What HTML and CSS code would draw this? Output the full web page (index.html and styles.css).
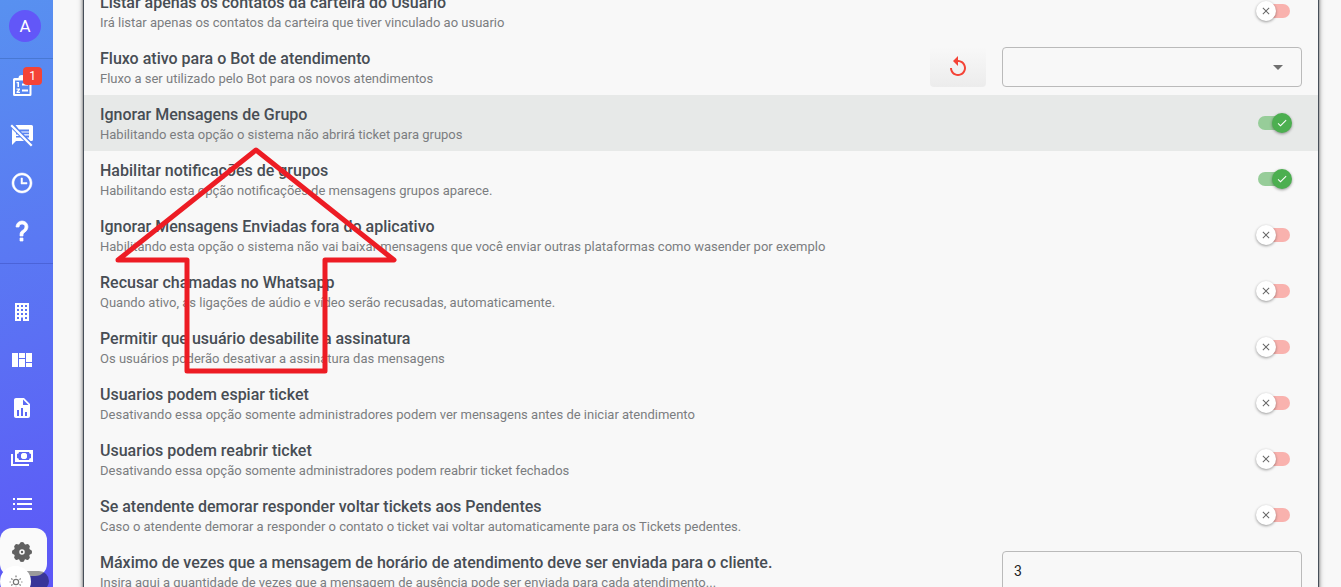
FILE: index.html
```html
<!DOCTYPE html>
<html lang="pt-BR">
<head>
<meta charset="utf-8">
<title>Configurações</title>
<link rel="stylesheet" href="styles.css">
</head>
<body>
<svg class="sprite" aria-hidden="true">
  <symbol id="check" viewBox="0 0 24 24"><path d="M9 16.2L4.8 12l-1.4 1.4L9 19 21 7l-1.4-1.4z"/></symbol>
  <symbol id="close" viewBox="0 0 24 24"><path d="M19 6.4L17.6 5 12 10.6 6.4 5 5 6.4l5.6 5.6L5 17.6 6.4 19l5.600-5.600 5.600 5.600 1.400-1.400-5.600-5.600z"/></symbol>
</svg>
<div class="app">
  <nav class="sidebar" aria-label="Menu">
    <div class="profile"><span class="avatar">A</span></div>
    <div class="group">
      <a class="nav-item" href="#" aria-label="Atendimentos">
        <svg viewBox="0 0 24 24"><path fill-rule="evenodd" d="M4.500 3H8.500a3.500 3 0 0 1 7 0H20a1.500 1.500 0 0 1 1.500 1.500V19.500A1.500 1.500 0 0 1 20 21H4.500A1.500 1.500 0 0 1 3 19.500V4.500A1.500 1.500 0 0 1 4.500 3zM5 5.500V19h14.500V5.500z"/><path d="M6.500 7H9V12H7.500V8.300H6.500zM6.500 13.500h3.500v1.200L8.300 16.700H10V18H6.500v-1.200L8.200 14.800H6.500zM12 8.500H18v2h-6zM12 14.500H18v2h-6z"/></svg>
        <span class="badge">1</span>
      </a>
      <a class="nav-item" href="#" aria-label="Chat interno">
        <svg viewBox="0 0 24 24"><path fill-rule="evenodd" d="M5.500 2H21.500A1.500 1.500 0 0 1 23 3.500V16.500A1.500 1.500 0 0 1 21.500 18H20.500L17 14.500H19V12.500H15L13.800 11.300H19V9.500H12L11 8.500H19V6.500H9zM2 6L6 10V11.500H7.500L9 13H6V14.500H10.500L14 18H6L2 22z"/><path fill="none" stroke="currentColor" stroke-width="2.200" d="M1.200 2.200L21.700 22.700"/></svg>
      </a>
      <a class="nav-item" href="#" aria-label="Agendamentos">
        <svg viewBox="0 0 24 24"><path stroke="currentColor" stroke-width=".5" d="M12 20C16.400 20 20 16.400 20 12S16.400 4 12 4 4 7.600 4 12 7.600 20 12 20M12 2C17.500 2 22 6.500 22 12S17.500 22 12 22C6.500 22 2 17.500 2 12C2 6.500 6.500 2 12 2M17 11.500V13H11V7H12.500V11.500H17Z"/></svg>
      </a>
      <a class="nav-item" href="#" aria-label="Ajuda">
        <svg viewBox="0 0 24 24"><path stroke="currentColor" stroke-width=".7" d="M10,19H13V22H10V19M12,2C17.350,2.220 19.680,7.620 16.500,11.670C15.670,12.670 14.330,13.330 13.670,14.170C13,15 13,16 13,17H10C10,15.330 10,13.920 10.670,12.920C11.330,11.920 12.670,11.330 13.500,10.670C15.920,8.430 15.320,5.260 12,5A3,3 0 0,0 9,8H6A6,6 0 0,1 12,2Z"/></svg>
      </a>
    </div>
    <div class="group admin">
      <a class="nav-item" href="#" aria-label="Empresas">
        <svg viewBox="0 0 24 24"><path fill-rule="evenodd" d="M5 3V21H11V17.500H13V21H19V3H5M7 5H9V7H7V5M11 5H13V7H11V5M15 5H17V7H15V5M7 9H9V11H7V9M11 9H13V11H11V9M15 9H17V11H15V9M7 13H9V15H7V13M11 13H13V15H11V13M15 13H17V15H15V13M7 17H9V19H7V17M15 17H17V19H15V17Z"/></svg>
      </a>
      <a class="nav-item" href="#" aria-label="Painel">
        <svg viewBox="0 0 24 24"><path d="M2,5V19H8V5H2M9,5V10H15V5H9M16,5V14H22V5H16M9,11V19H15V11H9M16,15V19H22V15H16Z"/></svg>
      </a>
      <a class="nav-item" href="#" aria-label="Relatórios">
        <svg viewBox="0 0 24 24"><path fill-rule="evenodd" d="M13,9H18.500L13,3.500V9M6,2H14L20,8V20A2,2 0 0,1 18,22H6C4.890,22 4,21.100 4,20V4C4,2.890 4.890,2 6,2M7,20H9V14H7V20M11,20H13V12H11V20M15,20H17V16H15V20Z"/></svg>
      </a>
      <a class="nav-item" href="#" aria-label="Financeiro">
        <svg viewBox="0 0 24 24"><path fill-rule="evenodd" d="M5,6H23V18H5V6M14,9A3,3 0 0,1 17,12A3,3 0 0,1 14,15A3,3 0 0,1 11,12A3,3 0 0,1 14,9M9,8A2,2 0 0,1 7,10V14A2,2 0 0,1 9,16H19A2,2 0 0,1 21,14V10A2,2 0 0,1 19,8H9M1,10H3V20H19V22H1V10Z"/><circle cx="14" cy="12" r="3"/></svg>
      </a>
      <a class="nav-item" href="#" aria-label="Filas">
        <svg viewBox="0 0 24 24"><path d="M3 6h2v2H3zM7 6h15v2H7zM3 11h2v2H3zM7 11h15v2H7zM3 16h2v2H3zM7 16h15v2H7z"/></svg>
      </a>
      <a class="nav-item active" href="#" aria-label="Configurações" aria-current="page">
        <svg viewBox="0 0 24 24"><g fill="none" stroke="currentColor"><circle cx="12" cy="12" r="5.500" stroke-width="5.500"/><path stroke-width="5" stroke-linecap="round" d="M12 4.500v1M12 18.500v1M4.500 12h1M18.500 12h1M6.700 6.700l.7.7M16.600 16.600l.7.7M17.300 6.700l-.7.7M7.400 16.600l-.7.7"/></g><circle cx="12" cy="12" r="1.200"/></svg>
      </a>
    </div>
    <label class="theme">
      <input type="checkbox" aria-label="Modo escuro">
      <span class="theme-thumb"><svg viewBox="0 0 24 24" fill="none" stroke="currentColor" stroke-width="2"><circle cx="12" cy="12" r="4.500"/><path d="M12 1v3M12 20v3M4 6l2 2M20 6l-2 2M4 18l2-2M20 18l-2-2M1 12h2M21 12h2"/></svg></span>
    </label>
  </nav>

  <main class="content">
    <section class="panel">
      <div class="row">
        <div class="text"><h2 id="t1">Listar apenas os contatos da carteira do Usuario</h2><p>Irá listar apenas os contatos da carteira que tiver vinculado ao usuario</p></div>
        <label class="toggle"><input type="checkbox" aria-labelledby="t1"><span class="thumb"><svg><use href="#close"/></svg></span></label>
      </div>
      <div class="row">
        <div class="text"><h2 id="t2">Fluxo ativo para o Bot de atendimento</h2><p>Fluxo a ser utilizado pelo Bot para os novos atendimentos</p></div>
        <button class="reset" type="button" aria-label="Restaurar"><svg viewBox="0 0 24 24"><path d="M12 5V1L7 6l5 5V7c3.310 0 6 2.690 6 6s-2.690 6-6 6-6-2.690-6-6H4c0 4.420 3.580 8 8 8s8-3.580 8-8-3.580-8-8-8z"/></svg></button>
        <div class="select"><select class="field" aria-labelledby="t2"><option></option></select><svg viewBox="0 0 24 24"><path d="M7 10l5 5 5-5z"/></svg></div>
      </div>
      <div class="row highlighted">
        <div class="text"><h2 id="t3">Ignorar Mensagens de Grupo</h2><p>Habilitando esta opção o sistema não abrirá ticket para grupos</p></div>
        <label class="toggle"><input type="checkbox" aria-labelledby="t3" checked><span class="thumb"><svg><use href="#check"/></svg></span></label>
      </div>
      <div class="row">
        <div class="text"><h2 id="t4">Habilitar notificações de grupos</h2><p>Habilitando esta opção notificações de mensagens grupos aparece.</p></div>
        <label class="toggle"><input type="checkbox" aria-labelledby="t4" checked><span class="thumb"><svg><use href="#check"/></svg></span></label>
      </div>
      <div class="row">
        <div class="text"><h2 id="t5">Ignorar Mensagens Enviadas fora do aplicativo</h2><p>Habilitando esta opção o sistema não vai baixar mensagens que você enviar outras plataformas como wasender por exemplo</p></div>
        <label class="toggle"><input type="checkbox" aria-labelledby="t5"><span class="thumb"><svg><use href="#close"/></svg></span></label>
      </div>
      <div class="row">
        <div class="text"><h2 id="t6">Recusar chamadas no Whatsapp</h2><p>Quando ativo, as ligações de aúdio e vídeo serão recusadas, automaticamente.</p></div>
        <label class="toggle"><input type="checkbox" aria-labelledby="t6"><span class="thumb"><svg><use href="#close"/></svg></span></label>
      </div>
      <div class="row">
        <div class="text"><h2 id="t7">Permitir que usuário desabilite a assinatura</h2><p>Os usuários poderão desativar a assinatura das mensagens</p></div>
        <label class="toggle"><input type="checkbox" aria-labelledby="t7"><span class="thumb"><svg><use href="#close"/></svg></span></label>
      </div>
      <div class="row">
        <div class="text"><h2 id="t8">Usuarios podem espiar ticket</h2><p>Desativando essa opção somente administradores podem ver mensagens antes de iniciar atendimento</p></div>
        <label class="toggle"><input type="checkbox" aria-labelledby="t8"><span class="thumb"><svg><use href="#close"/></svg></span></label>
      </div>
      <div class="row">
        <div class="text"><h2 id="t9">Usuarios podem reabrir ticket</h2><p>Desativando essa opção somente administradores podem reabrir ticket fechados</p></div>
        <label class="toggle"><input type="checkbox" aria-labelledby="t9"><span class="thumb"><svg><use href="#close"/></svg></span></label>
      </div>
      <div class="row">
        <div class="text"><h2 id="t10">Se atendente demorar responder voltar tickets aos Pendentes</h2><p>Caso o atendente demorar a responder o contato o ticket vai voltar automaticamente para os Tickets pedentes.</p></div>
        <label class="toggle"><input type="checkbox" aria-labelledby="t10"><span class="thumb"><svg><use href="#close"/></svg></span></label>
      </div>
      <div class="row">
        <div class="text"><h2 id="t11">Máximo de vezes que a mensagem de horário de atendimento deve ser enviada para o cliente.</h2><p>Insira aqui a quantidade de vezes que a mensagem de ausência pode ser enviada para cada atendimento...</p></div>
        <input class="field" type="text" value="3" aria-labelledby="t11">
      </div>
    </section>
  </main>
  <svg class="arrow" viewBox="0 0 284 230" aria-hidden="true"><path d="M142 4L280 114H211V225H73V114H4Z"/></svg>
</div>
</body>
</html>
```
FILE: styles.css
```css
* { box-sizing: border-box; }

body {
  margin: 0;
  background: #f8f8f8;
  color: #474d54;
  font-family: Roboto, "Liberation Sans", sans-serif;
  overflow: hidden;
}

h2, p { margin: 0; }
svg { display: block; fill: currentColor; }
.sprite { display: none; }

.app {
  position: relative;
  display: flex;
  height: 100vh;
  overflow: hidden;
}

.sidebar {
  display: flex;
  flex: none;
  flex-direction: column;
  width: 53px;
  background: linear-gradient(160deg, #5891f0, #5d57f7);
  color: #fff;
}

.profile {
  flex: none;
  height: 59px;
  padding: 10px 9px;
  border-bottom: 1px solid #4878d3;
}

.avatar {
  display: grid;
  place-items: center;
  width: 32px;
  height: 32px;
  border-radius: 50%;
  background: #6257f8;
  font-size: 17px;
}

.group { flex: none; padding: 4px 0 8px; }
.admin { padding-top: 24px; border-top: 1px solid #4b63d8; padding-bottom: 0; }

.nav-item {
  position: relative;
  display: flex;
  align-items: center;
  width: 47px;
  height: 48px;
  padding-left: 10px;
  color: #fff;
}

.nav-item svg { width: 24px; height: 24px; }

.active {
  border-radius: 12px;
  background: #fafafa;
  color: #616161;
}

.badge {
  position: absolute;
  top: 4px;
  left: 23px;
  width: 19px;
  height: 18px;
  border-radius: 4px;
  background: #f44336;
  font-size: 12px;
  line-height: 18px;
  text-align: center;
}

.theme {
  position: relative;
  flex: none;
  z-index: 1;
  width: 49px;
  height: 20px;
  margin-top: -5px;
  border-radius: 10px;
  background: rgba(0, 0, 0, .38);
}

.theme input, .toggle input { position: absolute; opacity: 0; margin: 0; }

.theme-thumb {
  position: absolute;
  top: -5px;
  left: 0;
  display: grid;
  place-items: center;
  width: 31px;
  height: 31px;
  border-radius: 50%;
  background: #fff;
  color: #777;
}

.theme-thumb svg { width: 14px; height: 14px; fill: none; }

.content { flex: 1; min-width: 0; padding: 0 22px 0 30px; }

.panel {
  margin-top: -17px;
  border: solid #474f59;
  border-width: 0 1px;
  box-shadow: 0 1px 5px rgba(0, 0, 0, .5), 0 2px 2px rgba(0, 0, 0, .3);
}

.row {
  display: flex;
  align-items: center;
  gap: 16px;
  min-height: 56px;
  padding: 8px 16px;
}

.highlighted { background: #e7e9e8; }
.text { flex: 1; min-width: 0; padding-top: 2px; }

.text h2 {
  font-size: 16px;
  font-weight: 500;
  line-height: 20px;
}

.text p {
  margin-top: 2px;
  color: #7b7d80;
  font-size: 13px;
  line-height: 16px;
}

.toggle {
  position: relative;
  width: 32px;
  height: 14px;
  margin-right: 12px;
  border-radius: 7px;
  background: #f9b2ae;
}

.thumb {
  position: absolute;
  top: -3px;
  left: -2px;
  display: grid;
  place-items: center;
  width: 20px;
  height: 20px;
  border-radius: 50%;
  background: #fff;
  box-shadow: 0 1px 3px rgba(0, 0, 0, .4);
  color: #666;
}

.thumb svg { width: 12px; height: 12px; }
.toggle:has(:checked) { background: #97cd99; }
.toggle :checked + .thumb { left: 14px; background: #4caf50; color: #fff; }

.reset {
  display: grid;
  place-items: center;
  width: 56px;
  height: 40px;
  padding: 0;
  border: 0;
  border-radius: 4px;
  background: linear-gradient(#f8f8f8, #ececec);
  color: #f44336;
}

.reset svg { width: 24px; height: 24px; }
.select { position: relative; }

.field {
  display: block;
  width: 300px;
  height: 40px;
  padding: 0 11px;
  border: 1px solid #bababa;
  border-radius: 4px;
  background: transparent;
  color: #222;
  font: 14px Roboto, "Liberation Sans", sans-serif;
  appearance: none;
}

.select svg {
  position: absolute;
  top: 8px;
  right: 12px;
  width: 24px;
  height: 24px;
  color: #707070;
  pointer-events: none;
}

.arrow {
  position: absolute;
  top: 146px;
  left: 114px;
  width: 284px;
  height: 230px;
  fill: none;
  stroke: #ed1c24;
  stroke-width: 5;
  stroke-linejoin: round;
  pointer-events: none;
}
```
